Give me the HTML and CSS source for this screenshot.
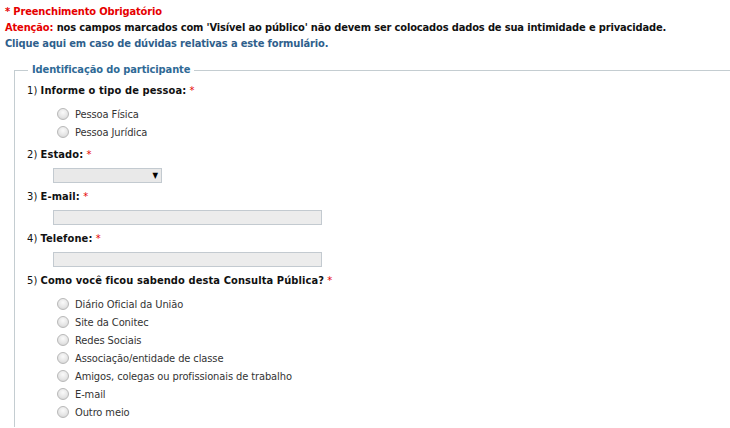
FILE: index.html
```html
<!DOCTYPE html>
<html lang="pt-BR">
<head>
  <meta charset="UTF-8" />
  <meta name="viewport" content="width=device-width, initial-scale=1.0"/>
  <title>Consulta Pública</title>
  <link rel="stylesheet" href="styles.css">
</head>
<body>
  <div class="notes">
    <p class="req">* Preenchimento Obrigatório</p>
    <p class="warn"><span class="red">Atenção:</span> nos campos marcados com 'Visível ao público' não devem ser colocados dados de sua intimidade e privacidade.</p>
    <p class="help"><a href="#">Clique aqui em caso de dúvidas relativas a este formulário.</a></p>
  </div>

  <fieldset class="group">
    <legend>Identificação do participante</legend>

    <div class="question q-radio">
      <div class="q-label">1) <b>Informe o tipo de pessoa:</b> <span class="star">*</span></div>
      <div class="options">
        <label class="opt"><input type="radio" name="tipo"> Pessoa Física</label>
        <label class="opt"><input type="radio" name="tipo"> Pessoa Jurídica</label>
      </div>
    </div>

    <div class="question">
      <div class="q-label">2) <b>Estado:</b> <span class="star">*</span></div>
      <div class="field">
        <div class="select"><span class="arrow">&#9660;</span></div>
      </div>
    </div>

    <div class="question">
      <div class="q-label">3) <b>E-mail:</b> <span class="star">*</span></div>
      <div class="field"><input type="text" class="text-in"></div>
    </div>

    <div class="question">
      <div class="q-label">4) <b>Telefone:</b> <span class="star">*</span></div>
      <div class="field"><input type="text" class="text-in"></div>
    </div>

    <div class="question q-radio">
      <div class="q-label">5) <b>Como você ficou sabendo desta Consulta Pública?</b> <span class="star">*</span></div>
      <div class="options">
        <label class="opt"><input type="radio" name="origem"> Diário Oficial da União</label>
        <label class="opt"><input type="radio" name="origem"> Site da Conitec</label>
        <label class="opt"><input type="radio" name="origem"> Redes Sociais</label>
        <label class="opt"><input type="radio" name="origem"> Associação/entidade de classe</label>
        <label class="opt"><input type="radio" name="origem"> Amigos, colegas ou profissionais de trabalho</label>
        <label class="opt"><input type="radio" name="origem"> E-mail</label>
        <label class="opt"><input type="radio" name="origem"> Outro meio</label>
      </div>
    </div>
  </fieldset>
</body>
</html>
```

FILE: styles.css
```css
body {
  font-family: "DejaVu Sans Condensed", "DejaVu Sans", Tahoma, sans-serif;
  font-size: 11px;
  color: #111;
  background: #fff;
  margin: 0;
  padding: 4px 5px 0 5px;
  overflow: hidden;
}

.notes p {
  margin: 0;
  line-height: 16px;
  font-weight: bold;
  letter-spacing: -0.14px;
}

.req, .red {
  color: #e60000;
}

.help a {
  color: #2f5f8c;
  text-decoration: none;
}

.group {
  margin: 11px -40px 0 9px;
  padding: 6px 12px 0 12px;
  border: 1px solid #c4cdd1;
  border-bottom: none;
}

.group legend {
  margin-left: 1px;
  padding: 0 4px;
  color: #2f6a96;
  font-weight: bold;
  line-height: 14px;
  letter-spacing: -0.1px;
}

.question {
  margin-bottom: 6px;
}

.q-label {
  line-height: 16px;
  letter-spacing: 0.1px;
}

.star {
  color: #e60000;
  font-weight: normal;
}

.field {
  padding: 5px 0 0 26px;
}

.options {
  padding: 6px 0 0 30px;
}

.opt {
  display: flex;
  align-items: center;
  height: 18px;
  color: #333;
  letter-spacing: -0.1px;
}

.opt input {
  appearance: none;
  -webkit-appearance: none;
  width: 12px;
  height: 12px;
  margin: 0 6px 0 0;
  border: 1px solid #b8b8b8;
  border-radius: 50%;
  background: radial-gradient(circle at 50% 35%, #fafafa 0%, #e6e6e6 55%, #cfcfcf 100%);
}

.select {
  width: 104px;
  height: 13px;
  border: 1px solid #c3cad0;
  background: #e9e9e9;
  display: flex;
  justify-content: flex-end;
  align-items: center;
  padding-right: 3px;
}

.arrow {
  font-size: 8px;
  color: #000;
}

.text-in {
  display: block;
  width: 267px;
  height: 13px;
  margin: 0;
  padding: 0;
  border: 1px solid #c3cad0;
  background: #ececec;
}
```
